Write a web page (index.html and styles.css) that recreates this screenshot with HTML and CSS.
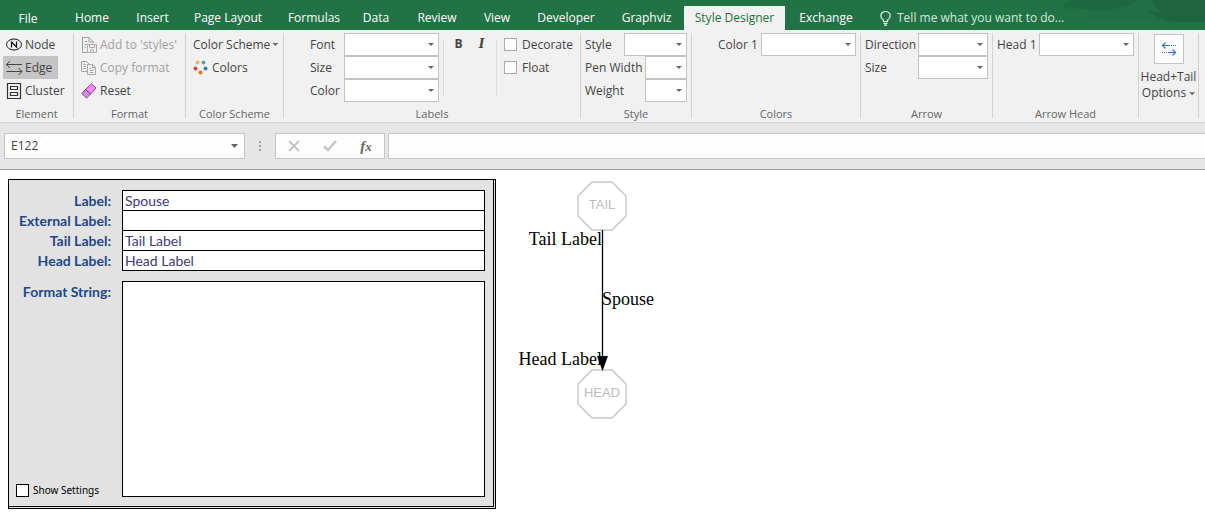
FILE: index.html
```html
<!DOCTYPE html>
<html lang="en">
<head>
<meta charset="utf-8">
<title>Style Designer</title>
<link rel="stylesheet" href="styles.css">
</head>
<body>
<header class="titlebar">
  <nav class="tabs">
    <a class="tab tab-file" href="#">File</a>
    <a class="tab" href="#">Home</a>
    <a class="tab" href="#">Insert</a>
    <a class="tab" href="#">Page Layout</a>
    <a class="tab" href="#">Formulas</a>
    <a class="tab" href="#">Data</a>
    <a class="tab" href="#">Review</a>
    <a class="tab" href="#">View</a>
    <a class="tab" href="#">Developer</a>
    <a class="tab" href="#">Graphviz</a>
    <a class="tab tab-active" href="#" aria-current="page">Style Designer</a>
    <a class="tab" href="#">Exchange</a>
  </nav>
  <button class="tellme" type="button">
    <svg width="11" height="15" viewBox="0 0 11 15" fill="none" stroke="#e4f0e8" stroke-width="1.2"><path d="M3.500 10.500V9.200C2 8 .8 6.800 .8 4.900A4.700 4.400 0 0 1 10.200 4.900C10.200 6.800 9 8 7.500 9.200V10.500ZM3.500 12.300H7.500M4 14.200H7"/></svg>
    <span>Tell me what you want to do...</span>
  </button>
  <svg class="decor" width="165" height="22" viewBox="0 0 165 22"><path d="M30 0H165V22H47V10H22Q26 2 30 0Z" fill="#216f44"/><path d="M22 8Q26 2 30 0H97Q88 8 74 9Q60 12 47 9Q32 6 22 8Z" fill="#1f683f"/><path d="M113 0H165V22H137Q120 20 107 11Q114 13 121 12Q113 7 113 0Z" fill="#1e643c"/></svg>
</header>

<section class="ribbon" aria-label="Style Designer">
  <div class="group">
    <div class="body element">
      <button class="cmd" type="button"><svg width="17" height="13" viewBox="0 0 17 13" fill="none" stroke="#111"><ellipse cx="8" cy="6.500" rx="7.500" ry="5.500"/><path d="M5.500 9.500V4L10.500 9V3.500" stroke-width="1.200"/></svg>Node</button>
      <button class="cmd cmd-on" type="button"><svg width="17" height="15" viewBox="0 0 17 15" fill="none" stroke="#444"><path d="M.5 4.500H16M4 1L.5 4.500L4 8M.5 11.500H16M12.500 8L16 11.500L12.500 15"/></svg>Edge</button>
      <button class="cmd" type="button"><svg width="17" height="16" viewBox="0 0 17 16" fill="none" stroke="#333"><path d="M1.500 .5H14.500V15.500H1.500ZM4.500 3.500H11.500V6.500H4.500ZM4.500 9.500H11.500V12.500H4.500Z" stroke-width="1.200"/></svg>Cluster</button>
    </div>
    <h2 class="name">Element</h2>
  </div>
  <div class="group">
    <div class="body format">
      <button class="cmd" type="button" disabled><svg width="16" height="16" viewBox="0 0 16 16" fill="none" stroke="#a0a0a0"><path d="M6 15.500H1.500V.5H8L12.500 5V6M8 .5V5H12.500M3.500 4.500H6M3.500 7.500H6M3.500 10.500H5"/><path d="M6.500 7.500H15.500V15.500H6.500ZM8.500 7.500V10.500H13.500V7.500M9.500 15.500V13H12.500V15.500" stroke="#b3a6b3"/></svg>Add to 'styles'</button>
      <button class="cmd" type="button" disabled><svg width="16" height="16" viewBox="0 0 16 16" fill="none" stroke="#a8a8a8"><path d="M6 11.500H.5V1.500H5.500L8 4M2.500 4.500H5M2.500 6.500H5M2.500 8.500H5"/><path d="M6.500 4.500H11.500L14.500 7.500V14.500H6.500ZM11.500 4.500V7.500H14.500M8.500 8.500H10M8.500 10.500H12.500M8.500 12.500H12.500"/></svg>Copy format</button>
      <button class="cmd" type="button"><svg width="16" height="16" viewBox="0 0 16 16" stroke="#8a3a96"><path d="M4.500 6.500L10.500 .8L15 5L9.500 11Z" fill="#ff8cff"/><path d="M.8 10.500L4.500 6.500L9.500 11L5.500 15Z" fill="#d38fdc"/></svg>Reset</button>
    </div>
    <h2 class="name">Format</h2>
  </div>
  <div class="group">
    <div class="body scheme">
      <button class="cmd" type="button">Color Scheme<i class="caret"></i></button>
      <button class="cmd cmd-colors" type="button"><svg width="15" height="16" viewBox="0 0 15 16"><circle cx="4.500" cy="2.500" r="2" fill="#ebb45f"/><circle cx="10.500" cy="2.500" r="2" fill="#62a58b"/><circle cx="2.500" cy="8.500" r="2" fill="#d3492b"/><circle cx="12.500" cy="8.500" r="2" fill="#3f74b5"/><circle cx="7.500" cy="12.500" r="2" fill="#e8720c"/></svg>Colors</button>
    </div>
    <h2 class="name">Color Scheme</h2>
  </div>
  <div class="group">
    <div class="body labels">
      <div class="fields">
        <label for="font">Font</label><select id="font"></select>
        <label for="fsize">Size</label><select id="fsize"></select>
        <label for="fcolor">Color</label><select id="fcolor"></select>
      </div>
      <div class="weights">
        <button class="bi bold" type="button">B</button>
        <button class="bi italic" type="button">I</button>
      </div>
      <div class="checks">
        <label class="check"><input type="checkbox">Decorate</label>
        <label class="check"><input type="checkbox">Float</label>
      </div>
    </div>
    <h2 class="name">Labels</h2>
  </div>
  <div class="group">
    <div class="body style">
      <div class="row"><label for="style">Style</label><select id="style" class="mid"></select></div>
      <div class="row"><label for="pen">Pen Width</label><select id="pen" class="small"></select></div>
      <div class="row"><label for="weight">Weight</label><select id="weight" class="small"></select></div>
    </div>
    <h2 class="name">Style</h2>
  </div>
  <div class="group">
    <div class="body colors">
      <div class="row"><label for="color1">Color 1</label><select id="color1"></select></div>
    </div>
    <h2 class="name">Colors</h2>
  </div>
  <div class="group">
    <div class="body arrow">
      <div class="row"><label for="direction">Direction</label><select id="direction" class="mid"></select></div>
      <div class="row"><label for="asize">Size</label><select id="asize" class="mid"></select></div>
    </div>
    <h2 class="name">Arrow</h2>
  </div>
  <div class="group">
    <div class="body arrow-head">
      <div class="row"><label for="head1">Head 1</label><select id="head1"></select></div>
    </div>
    <h2 class="name">Arrow Head</h2>
  </div>
  <div class="group">
    <button class="big" type="button">
      <span class="big-icon"><svg width="16" height="14" viewBox="0 0 16 14" fill="none" stroke="#3c78b4" stroke-width="1.200"><path d="M1.500 3.500H9M4.500 .5L1.500 3.500L4.500 6.500M14.500 10.500H7M11.500 7.500L14.500 10.500L11.500 13.500"/><path d="M10 3.500H15M1 10.500H7" stroke-dasharray="1 1"/></svg></span>
      <span>Head+Tail</span>
      <span>Options<i class="caret"></i></span>
    </button>
  </div>
</section>

<section class="formula" aria-label="Formula bar">
  <div class="namebox"><input type="text" value="E122" aria-label="Name box"><i class="caret"></i></div>
  <svg class="grip" width="2" height="10" viewBox="0 0 2 10" fill="#a0a0a0"><path d="M0 0H2V2H0ZM0 4H2V6H0ZM0 8H2V10H0Z"/></svg>
  <div class="fx">
    <button type="button" aria-label="Cancel"><svg width="12" height="12" viewBox="0 0 12 12" stroke="#c6c6c6" stroke-width="2"><path d="M1 1L11 11M11 1L1 11"/></svg></button>
    <button type="button" aria-label="Enter"><svg width="14" height="12" viewBox="0 0 14 12" fill="none" stroke="#c6c6c6" stroke-width="2.500"><path d="M1 6.500L5 10L13 1"/></svg></button>
    <button class="fn" type="button" aria-label="Insert function">f<small>x</small></button>
  </div>
  <input class="entry" type="text" aria-label="Formula">
</section>

<main class="sheet">
  <form class="panel">
    <label for="l1">Label:</label><input id="l1" type="text" value="Spouse">
    <label for="l2">External Label:</label><input id="l2" type="text">
    <label for="l3">Tail Label:</label><input id="l3" type="text" value="Tail Label">
    <label for="l4">Head Label:</label><input id="l4" type="text" value="Head Label">
    <div class="side">
      <label for="fmt">Format String:</label>
      <label class="show"><input type="checkbox">Show Settings</label>
    </div>
    <textarea id="fmt"></textarea>
  </form>
  <svg class="graph" width="160" height="250" viewBox="0 0 160 250" role="img" aria-label="Edge preview">
    <g fill="none" stroke="#c8c8c8" stroke-width="1.500"><path d="M76 3H96L110 17V37L96 51H76L62 37V17Z"/><path d="M76 191H96L110 205V225L96 239H76L62 225V205Z"/></g>
    <g class="node" text-anchor="middle"><text x="86" y="30">TAIL</text><text x="86" y="218">HEAD</text></g>
    <path d="M86.500 51V178" stroke="#000" stroke-width="1.300"/><path d="M81 177H92L86.500 192Z"/>
    <g class="edge"><text x="86" y="66" text-anchor="end">Tail Label</text><text x="86" y="126">Spouse</text><text x="86" y="186" text-anchor="end">Head Label</text></g>
  </svg>
</main>
</body>
</html>
```
FILE: styles.css
```css
* { box-sizing: border-box; }
body { margin: 0; background: #fff; color: #444; font: 12px/16px "Open Sans", "Noto Sans", sans-serif; }
button, input, select, textarea { font: inherit; color: inherit; margin: 0; padding: 0; border: 0; background: none; border-radius: 0; }
button, label { white-space: nowrap; }
svg { flex: none; }

.titlebar { position: relative; display: flex; height: 30px; padding-top: 6px; background: #217346; }
.tabs { display: grid; grid-template-columns: 56px 72px 49px 102px 70px 54px 68px 52px 86px 75px 101px 82px; }
.tab { display: flex; align-items: center; justify-content: center; color: #fff; text-decoration: none; white-space: nowrap; }
.tab-file { padding-top: 2px; }
.tab-active { background: #f1f1f1; color: #217346; }
.tellme { position: relative; z-index: 1; display: flex; align-items: center; gap: 6px; margin-left: 13px; color: #d5e7dc; }
.decor { position: absolute; top: 0; right: 0; }

.ribbon { display: grid; grid-template-columns: 74px 112px 98px 297px 111px 169px 132px 146px 60px; height: 93px; padding-top: 3px; background: #f1f1f1; border-bottom: 1px solid #d2d2d2; }
.group { display: flex; flex-direction: column; justify-content: space-between; height: 85px; border-right: 1px solid #d2d2d2; }
.name { margin: 0; text-align: center; font-size: 11px; line-height: 8px; font-weight: 400; color: #666; }
.body { display: flex; flex-direction: column; align-items: flex-start; }
.cmd { display: flex; align-items: center; gap: 2px; height: 23px; padding: 0 6px 0 3px; }
.cmd-on { background: #c5c5c5; }
.cmd:disabled { color: #a0a0a0; }
.cmd-colors { gap: 4px; }
.element { padding-left: 3px; }
.format { padding-left: 4px; }
.format .cmd { gap: 3px; }
.scheme { padding-left: 4px; }
.scheme .cmd { padding-right: 0; }
.caret { display: inline-block; width: 6px; height: 3px; background: #666; clip-path: polygon(0 0, 100% 0, 50% 100%); vertical-align: middle; }
select { appearance: none; width: 95px; height: 23px; border: 1px solid #c3c3c3; background: #fff url("data:image/svg+xml,%3Csvg xmlns='http://www.w3.org/2000/svg' width='6' height='3'%3E%3Cpath d='M0 0H6L3 3Z' fill='%23666'/%3E%3C/svg%3E") no-repeat right 4px center; }
.labels { flex-direction: row; padding-left: 26px; }
.fields { display: grid; grid-template-columns: 34px 95px; align-items: center; }
.weights { display: flex; align-items: flex-start; justify-content: center; gap: 14px; width: 54px; height: 56px; margin: 7px 0 0 4px; border: solid #dcdcdc; border-width: 0 1px; }
.bi { width: 9px; line-height: 8px; }
.bold { font-weight: 700; }
.italic { font: italic 700 12px/8px "DejaVu Serif", serif; }
.checks { padding-left: 7px; }
.check { display: flex; align-items: center; gap: 5px; height: 23px; }
input[type=checkbox] { appearance: none; width: 13px; height: 13px; border: 1px solid #ababab; background: #fff; }
.row { display: flex; align-items: center; justify-content: space-between; width: 100%; }
.style, .arrow, .arrow-head { padding: 0 4px; }
.colors { padding: 0 4px 0 26px; }
.mid { width: 70px; }
.style .mid { width: 63px; }
.small { width: 42px; }
.big { display: flex; flex-direction: column; align-items: center; padding-top: 1px; }
.big-icon { display: grid; place-items: center; width: 30px; height: 30px; margin-bottom: 5px; background: #fcfcfc; border: 1px solid #c3c3c3; }
.big .caret { margin-left: 3px; }

.formula { display: flex; align-items: center; height: 47px; padding-left: 4px; background: #e6e6e6; border-bottom: 1px solid #9b9b9b; }
.namebox, .fx, .entry { height: 26px; background: #fdfdfd; border: 1px solid #c6c6c6; }
.namebox { display: flex; align-items: center; width: 241px; padding: 0 6px; }
.namebox input { flex: 1; min-width: 0; }
.namebox .caret, .cmd .caret { flex: none; }
.namebox .caret { width: 7px; height: 4px; }
.grip { margin: 0 14px; }
.fx { display: grid; grid-template-columns: repeat(3, 36px); place-items: center; width: 110px; margin-right: 3px; }
.fx button { display: flex; align-items: center; }
.fx .fn { display: block; font: italic 700 15px/15px "Liberation Serif", serif; color: #666; }
.fn small { font-size: 13px; }
.entry { flex: 1; border-right: 0; padding: 0 6px; }

.sheet { display: flex; align-items: flex-start; gap: 20px; padding: 9px 8px 4px; }
.panel { display: grid; grid-template-columns: 113px 363px; grid-template-rows: repeat(4, 20px) auto; padding: 10px 8px 9px 0; background: #e2e2e2; border: solid #000; border-width: 1px 0 0 1px; border-right: 3px double #000; border-bottom: 3px double #000; font: 14px/22px Lato, sans-serif; color: #403a78; }
.panel > label, .side label:first-child { padding-right: 11px; text-align: right; font-weight: 700; color: #1f4788; }
.panel > input { height: 21px; padding: 0 2px; border: 1px solid #000; background: #fff; }
.panel textarea { height: 216px; margin-top: 11px; border: 1px solid #000; background: #fff; resize: none; padding: 2px; }
.side { display: flex; flex-direction: column; justify-content: space-between; padding-top: 11px; }
.panel .show { display: flex; align-items: center; gap: 4px; height: 13px; padding-left: 7px; font: 11px/13px "Noto Sans", sans-serif; color: #000; }
.panel .show { font-size: 10px; }
.show input { border-color: #000; }
.node { font: 13px "Liberation Sans", sans-serif; fill: #bdbdbd; }
.edge { font: 18px "Liberation Serif", serif; fill: #000; }
```
